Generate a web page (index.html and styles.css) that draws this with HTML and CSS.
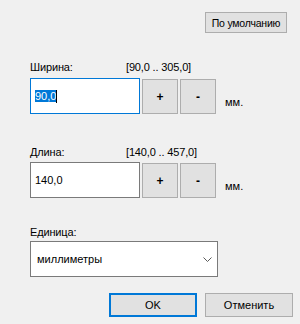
FILE: index.html
```html
<!DOCTYPE html>
<html lang="ru">
<head>
<meta charset="utf-8">
<link rel="stylesheet" href="styles.css">
</head>
<body>
<div class="dialog">
  <div class="top-row">
    <button class="btn btn-default">По умолчанию</button>
  </div>

  <div class="group g1">
    <div class="label-row">
      <span class="label">Ширина:</span>
      <span class="range">[90,0 .. 305,0]</span>
    </div>
    <div class="input-row">
      <div class="field focused"><span class="sel">90,0</span><span class="caret"></span></div>
      <button class="btn step">+</button>
      <button class="btn step">-</button>
      <span class="unit">мм.</span>
    </div>
  </div>

  <div class="group g2">
    <div class="label-row">
      <span class="label">Длина:</span>
      <span class="range">[140,0 .. 457,0]</span>
    </div>
    <div class="input-row">
      <div class="field">140,0</div>
      <button class="btn step">+</button>
      <button class="btn step">-</button>
      <span class="unit">мм.</span>
    </div>
  </div>

  <div class="group g3">
    <div class="label-row">
      <span class="label">Единица:</span>
    </div>
    <div class="select">
      <span>миллиметры</span>
      <svg class="chev" width="9" height="5" viewBox="0 0 9 5"><polyline points="0.5,0.5 4.5,4.5 8.5,0.5" fill="none" stroke="#5a5a5a" stroke-width="1"/></svg>
    </div>
  </div>

  <div class="bottom-row">
    <button class="btn btn-ok">OK</button>
    <button class="btn btn-cancel">Отменить</button>
  </div>
</div>
</body>
</html>
```

FILE: styles.css
```css
html, body {
  margin: 0;
  padding: 0;
  background: #f0f0f0;
}
body {
  width: 300px;
  height: 324px;
  overflow: hidden;
  font-family: "Liberation Sans", Arial, sans-serif;
  font-size: 11px;
  color: #000;
}
.dialog {
  display: flex;
  flex-direction: column;
  padding-top: 12px;
}
.btn {
  box-sizing: border-box;
  margin: 0;
  padding: 0;
  font-family: "Liberation Sans", Arial, sans-serif;
  font-size: 11px;
  color: #000;
  background: #e1e1e1;
  border: 1px solid #adadad;
  border-radius: 0;
}
.top-row {
  display: flex;
  justify-content: flex-end;
  padding-right: 13px;
}
.btn-default {
  width: 82px;
  height: 21px;
  font-size: 10.5px;
  letter-spacing: -0.2px;
}
.group {
  padding-left: 30px;
  display: flex;
  flex-direction: column;
}
.g1 { margin-top: 28px; }
.g2 { margin-top: 32px; }
.g3 { margin-top: 28px; }
.label-row {
  display: flex;
  height: 13px;
  line-height: 13px;
  letter-spacing: -0.15px;
}
.label {
  width: 96px;
}
.input-row {
  display: flex;
  align-items: flex-start;
  margin-top: 4px;
}
.g2 .input-row { margin-top: 3px; }
.field {
  box-sizing: border-box;
  width: 110px;
  height: 36px;
  background: #fff;
  border: 1px solid #7a7a7a;
  padding-left: 4px;
  line-height: 34px;
  display: flex;
  align-items: center;
}
.field.focused {
  border-color: #0078d7;
}
.sel {
  background: #0078d7;
  color: #fff;
  line-height: 12px;
  height: 12px;
}
.caret {
  width: 1px;
  height: 13px;
  background: #000;
}
.step {
  width: 36px;
  height: 35px;
  margin-top: 1px;
  margin-left: 2px;
  font-weight: bold;
  font-size: 12px;
}
.unit {
  align-self: flex-end;
  margin-left: 9px;
  margin-bottom: 5px;
  line-height: 13px;
}
.g3 .label-row { margin-bottom: 2px; }
.select {
  box-sizing: border-box;
  width: 188px;
  height: 36px;
  background: #fff;
  border: 1px solid #7a7a7a;
  display: flex;
  align-items: center;
  justify-content: space-between;
  padding: 0 5px 0 6px;
}
.chev {
  display: block;
  margin-top: 1px;
}
.bottom-row {
  display: flex;
  justify-content: flex-end;
  gap: 8px;
  padding-right: 7px;
  margin-top: 16px;
}
.btn-ok, .btn-cancel {
  width: 88px;
  height: 24px;
}
.btn-ok {
  border: 2px solid #0078d7;
}
```
